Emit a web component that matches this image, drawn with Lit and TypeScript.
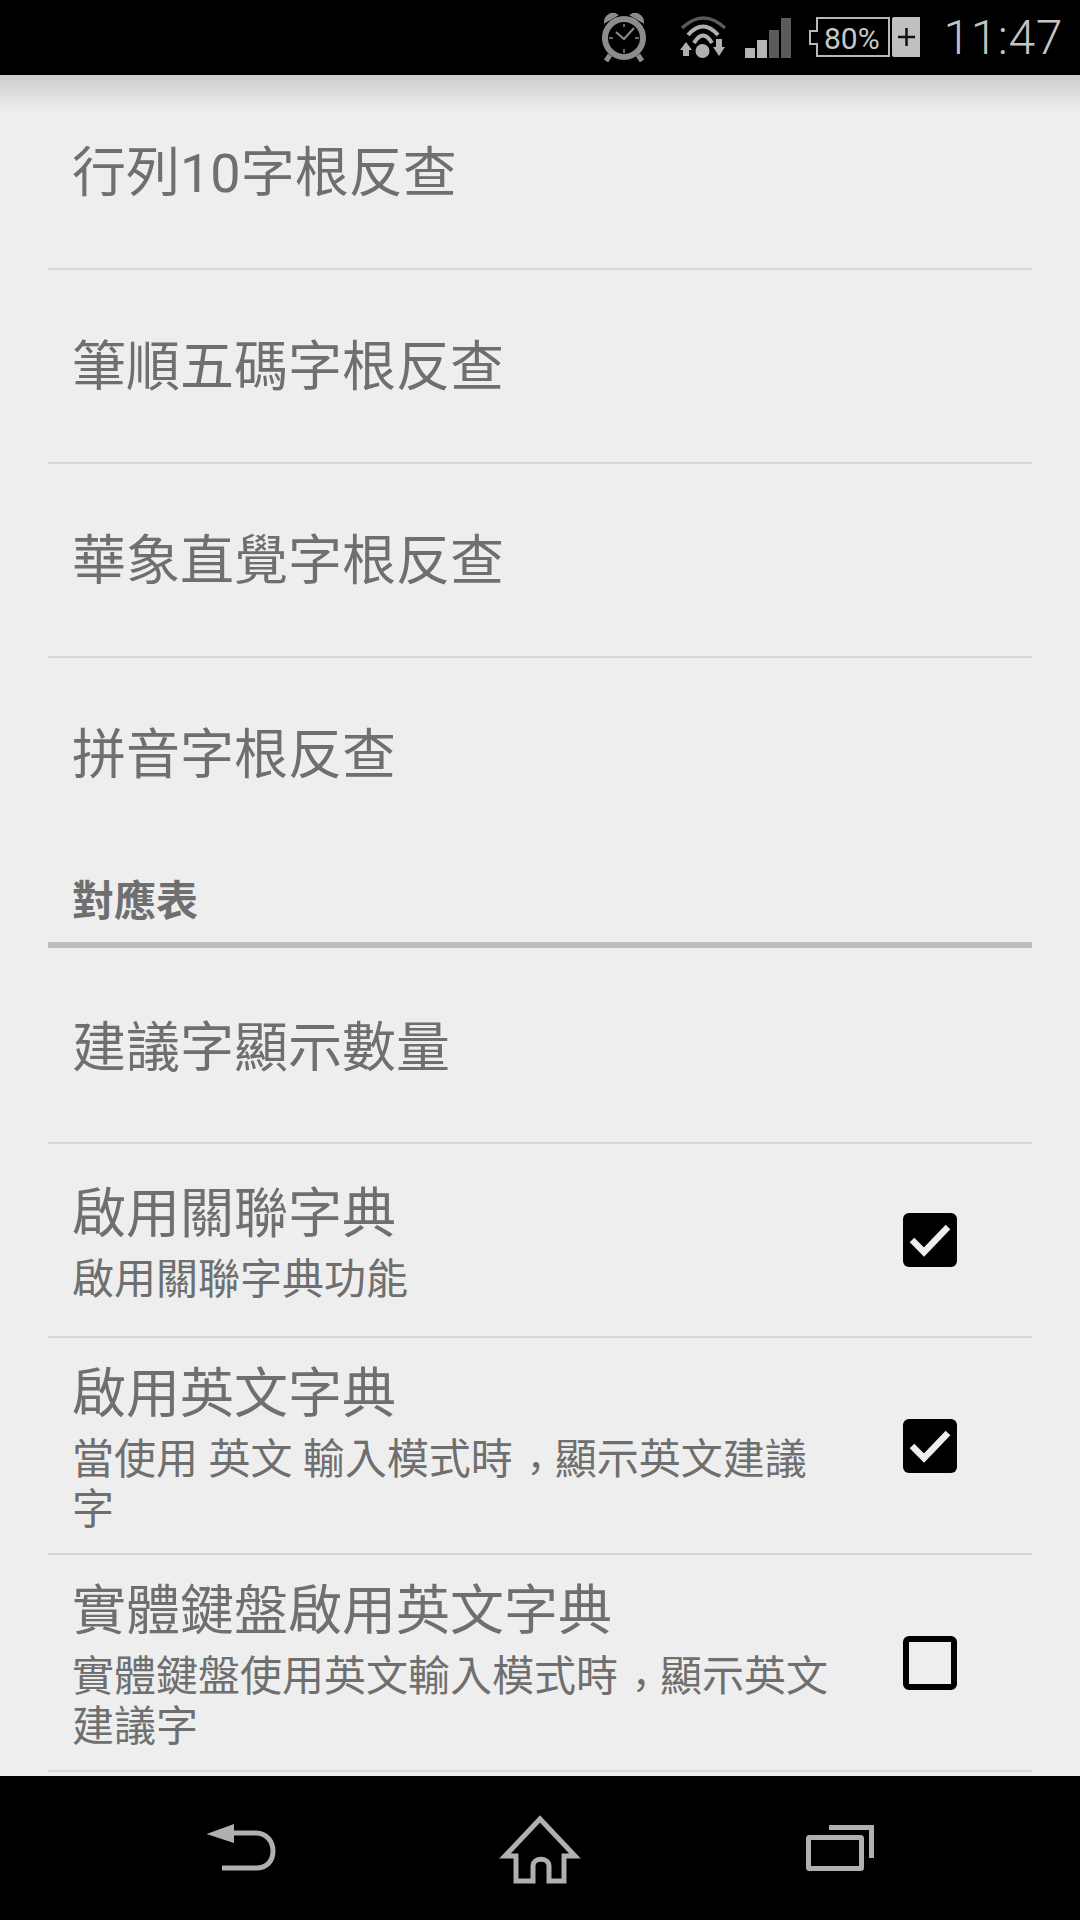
import { LitElement, html, css, svg } from "lit";
import { customElement } from "lit/decorators.js";

const plain = [
  { t: "行列10字根反查", c: "first line" },
  { t: "筆順五碼字根反查", c: "line" },
  { t: "華象直覺字根反查", c: "line" },
  { t: "拼音字根反查", c: "last" },
];
const toggles = [
  { t: "啟用關聯字典", a: "啟用關聯字典功能", b: "", c: "", on: true, cls: "short" },
  { t: "啟用英文字典", a: "當使用 英文 輸入模式時", b: "顯示英文建議", c: "字", on: true, cls: "tall" },
  { t: "實體鍵盤啟用英文字典", a: "實體鍵盤使用英文輸入模式時", b: "顯示英文", c: "建議字", on: false, cls: "tall" },
];

@customElement("app-root")
export class AppRoot extends LitElement {
  static styles = css`
    :host { display: block; width: 1080px; height: 1920px; background: #eeeeee; font-family: Roboto, "Noto Sans CJK TC", sans-serif; color: #6f6f6f; overflow: hidden; }
    .page { display: flex; flex-direction: column; height: 1920px; }
    .status { height: 75px; flex: none; background: #000; display: flex; align-items: center; justify-content: flex-end; position: relative; }
    .status svg { display: block; position: absolute; left: 580px; top: 0; }
    .time { font-size: 48px; font-weight: 300; color: #c4c4c4; padding-right: 17px; letter-spacing: 0.6px; line-height: 75px; }
    .content { flex: 1; min-height: 0; position: relative; padding: 0 48px; display: flex; flex-direction: column; }
    .shadow { position: absolute; left: 0; right: 0; top: 0; height: 36px; background: linear-gradient(#cccccc, #eeeeee); }
    .item { position: relative; flex: none; box-sizing: border-box; height: 194px; display: flex; align-items: center; padding: 4px 0 0 24px; font-size: 54px; line-height: 72px; }
    .line { border-bottom: 2px solid #d6d6d6; }
    .item.first { height: 195px; }
    .item.last { height: 192px; }
    .item.tall-item { height: 196px; padding-top: 8px; }
    .header { flex: none; box-sizing: border-box; height: 98px; display: flex; align-items: flex-end; padding: 0 0 12px 24px; font-size: 42px; font-weight: 700; line-height: 56px; border-bottom: 6px solid #bdbdbd; }
    .row { flex: none; display: flex; align-items: center; padding-left: 24px; border-bottom: 2px solid #d6d6d6; }
    .row.short { height: 192px; }
    .row.tall { height: 215px; }
    .text { width: 771px; flex: none; padding-top: 6px; }
    .title { font-size: 54px; line-height: 66px; }
    .sub { font-size: 42px; line-height: 50px; margin-top: 7px; }
    .comma { font-size: 38px; padding-left: 4px; vertical-align: -8px; line-height: 0; }
    .box { margin-left: 60px; width: 54px; height: 54px; border-radius: 6px; background: #000; flex: none; display: flex; align-items: center; justify-content: center; box-sizing: border-box; }
    .box.off { background: transparent; border: 6px solid #000; }
    .nav { height: 144px; flex: none; background: #000; }
    .nav svg { display: block; }
  `;

  statusIcons() {
    return svg`
      <circle cx="44" cy="38" r="19" fill="none" stroke="#8c8c8c" stroke-width="6"/>
      <path d="M25 22 a8 8 0 0 1 12 -7 z M63 22 a8 8 0 0 0 -12 -7 z" fill="#8c8c8c" stroke="#8c8c8c" stroke-width="2"/>
      <path d="M30 55 l-4 6 M58 55 l4 6" stroke="#8c8c8c" stroke-width="5"/>
      <path d="M36 32 L44 39 L54 28" fill="none" stroke="#8c8c8c" stroke-width="2"/>
      <path d="M44 24 v3 M44 49 v4 M29 38 h4 M55 38 h4" stroke="#8c8c8c" stroke-width="1.5"/>
      <path d="M102 28 Q123.5 8 145 28" fill="none" stroke="#5a5a5a" stroke-width="3.5"/>
      <path d="M108 35 Q123 18 138 35" fill="none" stroke="#b0b0b0" stroke-width="4"/>
      <path d="M114 43 Q123 28 132 43" fill="none" stroke="#b0b0b0" stroke-width="4"/>
      <circle cx="122.500" cy="51" r="7" fill="#b0b0b0"/>
      <path d="M106 42 L112 50 H109 V56 H103 V50 H100 Z" fill="#b0b0b0"/>
      <path d="M136 39 H142 V47 H145 L139 56 L133 47 H136 Z" fill="#b0b0b0"/>
      <rect x="165" y="48" width="10" height="10" fill="#b4b4b4"/>
      <rect x="177" y="40" width="10" height="18" fill="#b4b4b4"/>
      <rect x="189" y="30" width="10" height="28" fill="#5a5a5a"/>
      <rect x="201" y="18" width="10" height="40" fill="#5a5a5a"/>
      <path d="M237 18 H309 V56 H237 V44 H230 V31 H237 Z" fill="none" stroke="#b8b8b8" stroke-width="2"/>
      <rect x="312" y="17" width="29" height="40" rx="2" fill="#c0c0c0"/>
      <path d="M318 37 H335 M326.500 28 V46" stroke="#111" stroke-width="2.5"/>
      <text x="244" y="49" font-family="Roboto, sans-serif" font-size="30" fill="#c8c8c8">80%</text>
    `;
  }

  render() {
    return html`<div class="page" lang="zh-Hant">
      <div class="status">
        <svg width="340" height="75" viewBox="0 0 340 75">${this.statusIcons()}</svg>
        <div class="time">11:47</div>
      </div>
      <div class="content">
        <div class="shadow"></div>
        ${plain.map((p) => html`<div class="item ${p.c}">${p.t}</div>`)}
        <div class="header">對應表</div>
        <div class="item line tall-item">建議字顯示數量</div>
        ${toggles.map((r) => html`<div class="row ${r.cls}">
          <div class="text">
            <div class="title">${r.t}</div>
            <div class="sub">${r.a}${r.b ? html`<span class="comma">，</span>${r.b}` : ""}${r.c ? html`<br>${r.c}` : ""}</div>
          </div>
          <div class="box ${r.on ? "" : "off"}">
            ${r.on ? html`<svg width="42" height="36" viewBox="0 0 42 36"><path d="M3 18 L15 30 L39 5" fill="none" stroke="#eee" stroke-width="6.5"/></svg>` : ""}
          </div>
        </div>`)}
      </div>
      <div class="nav">
        <svg width="1080" height="144" viewBox="0 0 1080 144">
          <path d="M206.500 58 L234 48 V67 Z" fill="#b0b0b0"/>
          <path d="M232 57 H256 C267 57 273 66 273 75 C273 85 267 92 256 92 H222" fill="none" stroke="#b0b0b0" stroke-width="5"/>
          <path d="M516 105 V80 H505 L540 43 L575 80 H564 V105 H549 V90 C549 81 533 81 533 90 V105 Z" fill="none" stroke="#b0b0b0" stroke-width="5" stroke-linejoin="miter"/>
          <rect x="808.500" y="61.500" width="53" height="31" rx="1" fill="none" stroke="#b0b0b0" stroke-width="5"/>
          <path d="M829 51.500 H871.500 V82" fill="none" stroke="#b0b0b0" stroke-width="5"/>
        </svg>
      </div>
    </div>`;
  }
}
